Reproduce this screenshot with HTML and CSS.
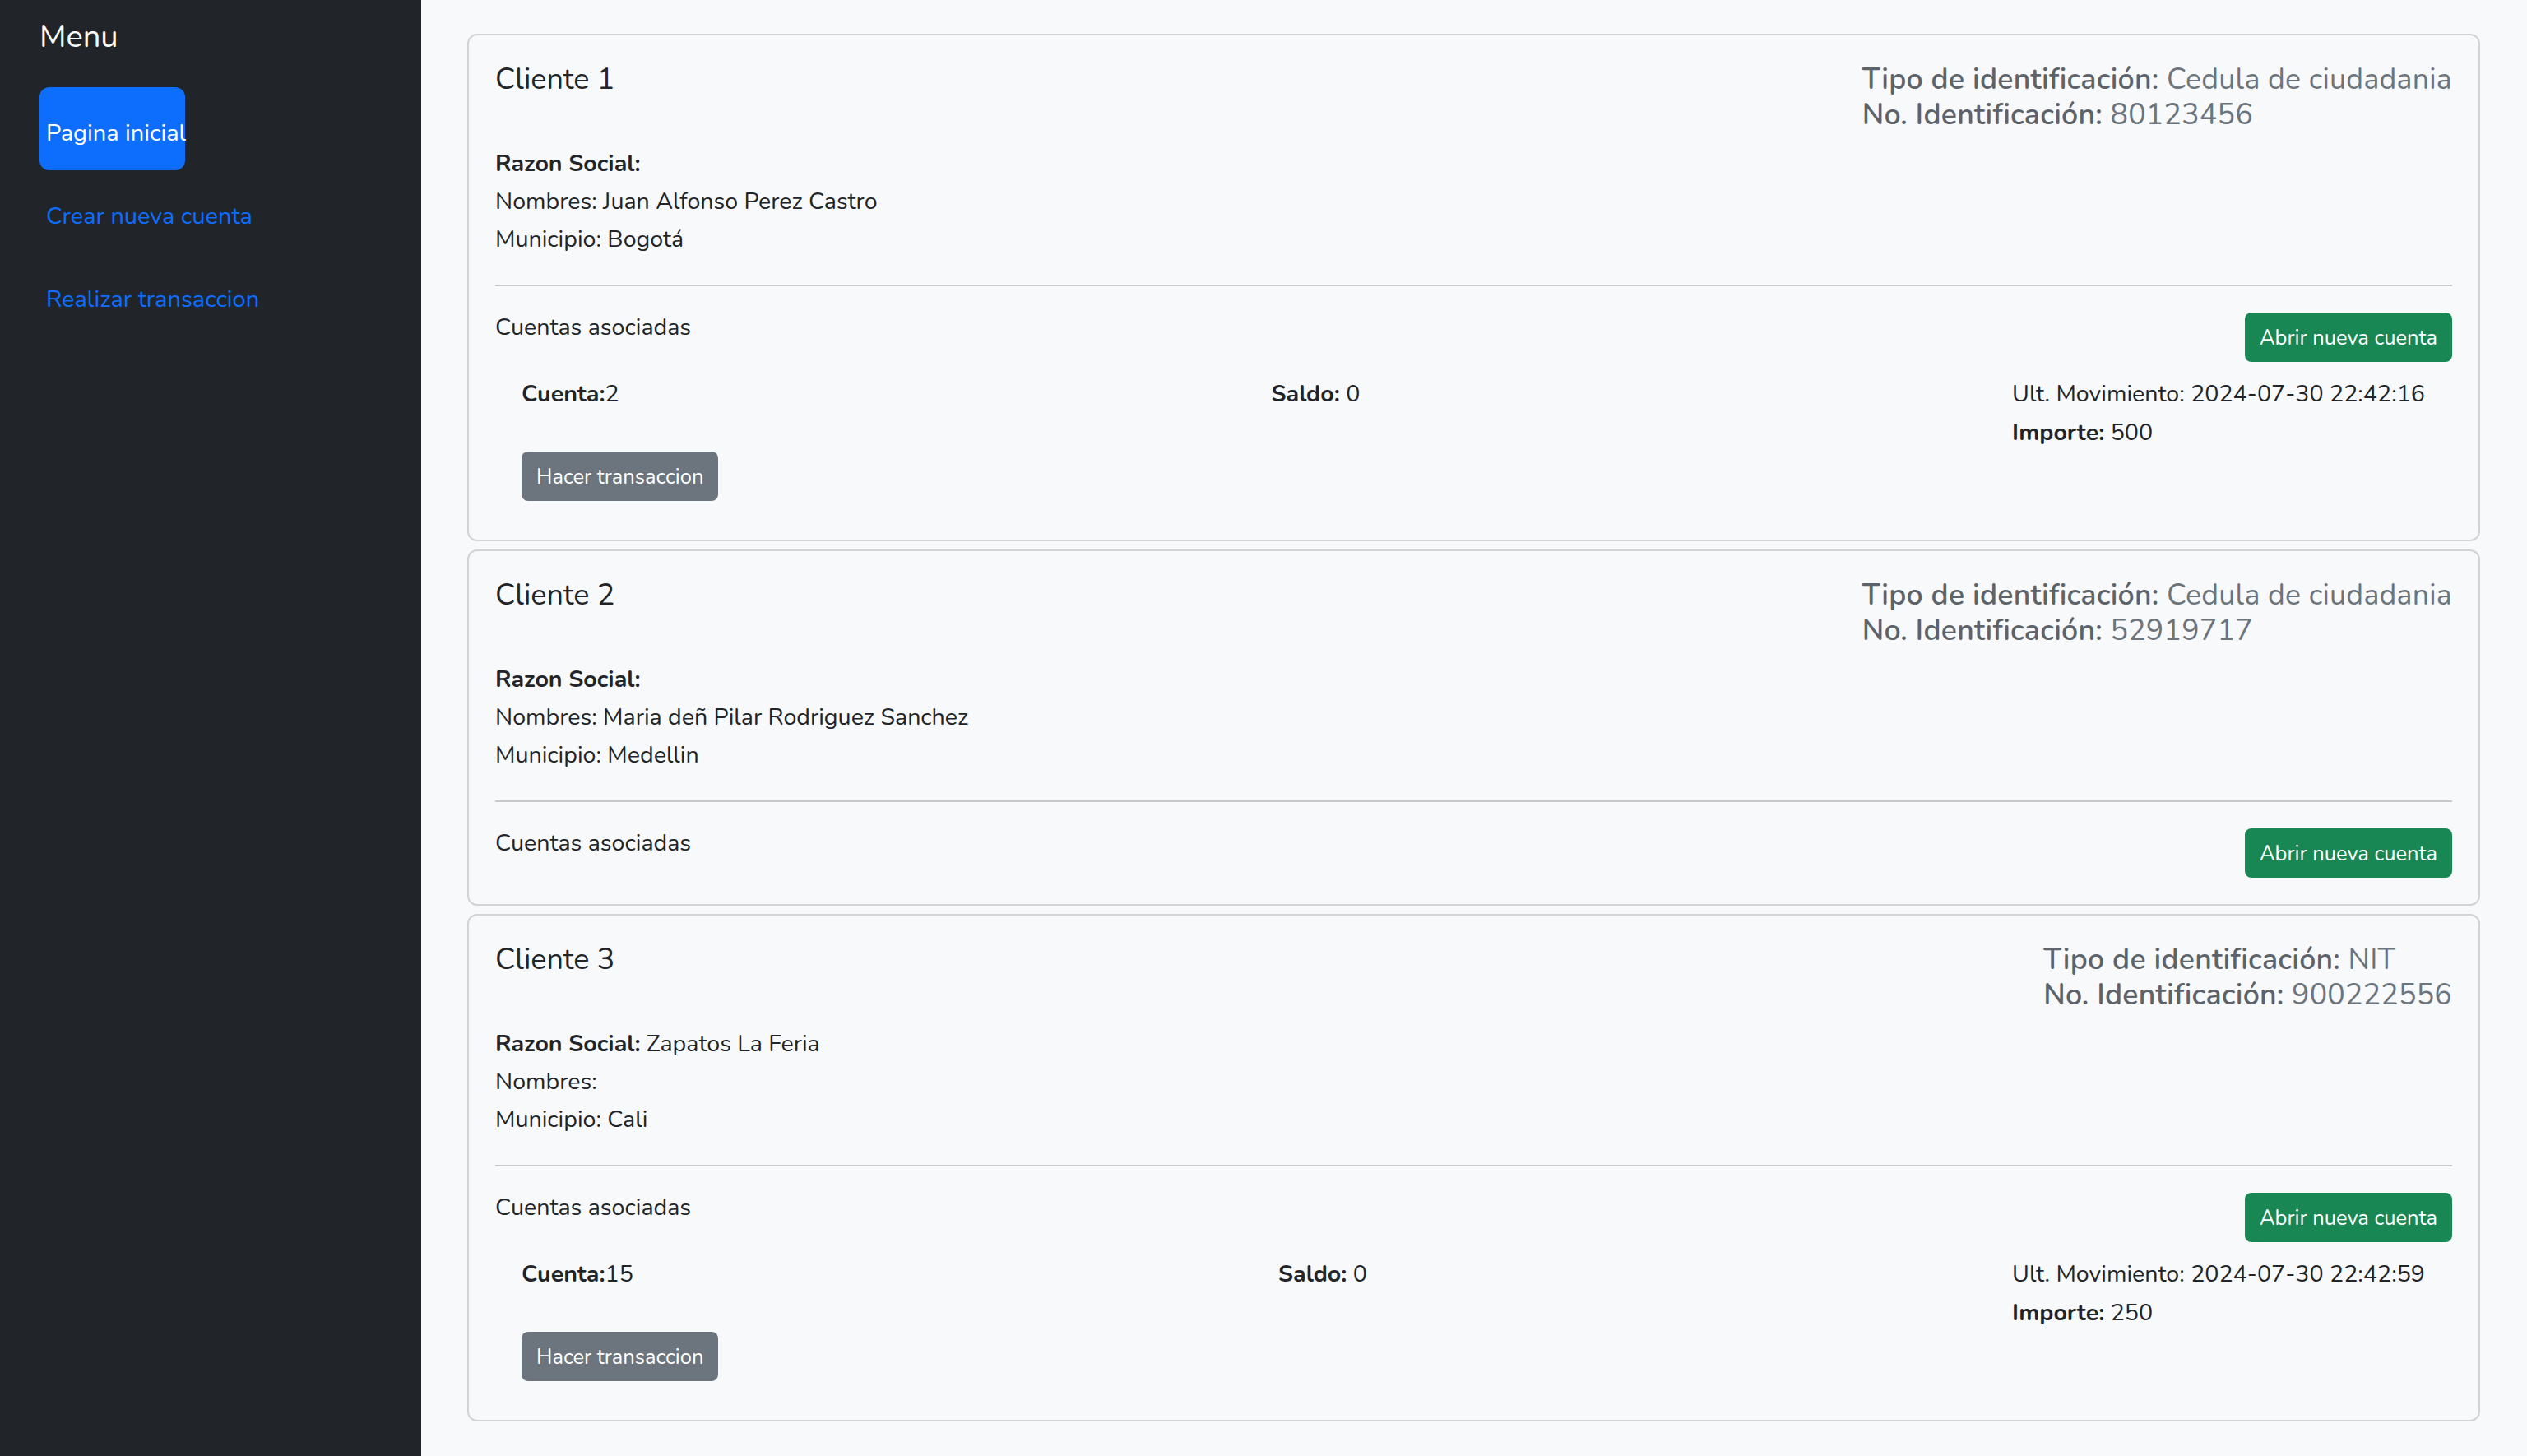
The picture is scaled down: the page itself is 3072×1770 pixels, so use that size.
FILE: index.html
```html
<!DOCTYPE html>
<html lang="es">
<head>
<meta charset="utf-8">
<title>Clientes</title>
<link rel="stylesheet" href="styles.css">
</head>
<body>
<div class="layout">
  <aside class="sidebar">
    <div class="menu-title">Menu</div>
    <nav class="nav">
      <a class="nav-link active" href="#">Pagina inicial</a>
      <a class="nav-link" href="#">Crear nueva cuenta</a>
      <a class="nav-link" href="#">Realizar transaccion</a>
    </nav>
  </aside>
  <main class="main">
    <section class="card">
      <div class="card-head">
        <div class="client-name">Cliente 1</div>
        <div class="ident">
          <div><span class="ident-label">Tipo de identificación:</span> Cedula de ciudadania</div>
          <div><span class="ident-label">No. Identificación:</span> 80123456</div>
        </div>
      </div>
      <div class="info">
        <p><b>Razon Social:</b> </p>
        <p>Nombres: Juan Alfonso Perez Castro</p>
        <p>Municipio: Bogotá</p>
      </div>
      <hr class="divider">
      <div class="accounts-head">
        <span class="accounts-title">Cuentas asociadas</span>
        <button class="btn btn-success">Abrir nueva cuenta</button>
      </div>
      <div class="account">
        <div class="account-row">
          <div><b>Cuenta:</b>2</div>
          <div><b>Saldo:</b> 0</div>
          <div class="movement">
            <div>Ult. Movimiento: 2024-07-30 22:42:16</div>
            <div><b>Importe:</b> 500</div>
          </div>
        </div>
        <button class="btn btn-secondary">Hacer transaccion</button>
      </div>
    </section>

    <section class="card">
      <div class="card-head">
        <div class="client-name">Cliente 2</div>
        <div class="ident">
          <div><span class="ident-label">Tipo de identificación:</span> Cedula de ciudadania</div>
          <div><span class="ident-label">No. Identificación:</span> 52919717</div>
        </div>
      </div>
      <div class="info">
        <p><b>Razon Social:</b> </p>
        <p>Nombres: Maria deñ Pilar Rodriguez Sanchez</p>
        <p>Municipio: Medellin</p>
      </div>
      <hr class="divider">
      <div class="accounts-head">
        <span class="accounts-title">Cuentas asociadas</span>
        <button class="btn btn-success">Abrir nueva cuenta</button>
      </div>
    </section>

    <section class="card">
      <div class="card-head">
        <div class="client-name">Cliente 3</div>
        <div class="ident">
          <div><span class="ident-label">Tipo de identificación:</span> NIT</div>
          <div><span class="ident-label">No. Identificación:</span> 900222556</div>
        </div>
      </div>
      <div class="info">
        <p><b>Razon Social:</b> Zapatos La Feria</p>
        <p>Nombres: </p>
        <p>Municipio: Cali</p>
      </div>
      <hr class="divider">
      <div class="accounts-head">
        <span class="accounts-title">Cuentas asociadas</span>
        <button class="btn btn-success">Abrir nueva cuenta</button>
      </div>
      <div class="account">
        <div class="account-row">
          <div><b>Cuenta:</b>15</div>
          <div><b>Saldo:</b> 0</div>
          <div class="movement">
            <div>Ult. Movimiento: 2024-07-30 22:42:59</div>
            <div><b>Importe:</b> 250</div>
          </div>
        </div>
        <button class="btn btn-secondary">Hacer transaccion</button>
      </div>
    </section>
  </main>
</div>
</body>
</html>
```

FILE: styles.css
```css
* { box-sizing: border-box; }

html, body {
  margin: 0;
  padding: 0;
}

body {
  font-family: "Nunito", "Lato", "Open Sans", sans-serif;
  font-size: 28.6px;
  color: #212529;
  background: #f8f9fa;
}

.layout {
  display: flex;
  min-height: 1770px;
}

.sidebar {
  width: 512px;
  flex: 0 0 512px;
  background: #212529;
  padding: 22px 0 0 48px;
}

.menu-title {
  color: #ffffff;
  font-size: 38px;
  line-height: 46px;
  margin-bottom: 38px;
}

.nav {
  display: flex;
  flex-direction: column;
}

.nav-link {
  display: flex;
  align-items: center;
  height: 101px;
  padding: 10px 0 0 8px;
  font-size: 29px;
  color: #0d6efd;
  text-decoration: none;
  white-space: nowrap;
  width: fit-content;
}

.nav-link.active {
  width: 177px;
  background: #0d6efd;
  color: #ffffff;
  border-radius: 12px;
}

.main {
  flex: 1;
  padding: 41px 57px 0 56px;
  display: flex;
  flex-direction: column;
  gap: 10px;
}

.card {
  background: #f8f9fa;
  border: 2px solid #d2d3d4;
  border-radius: 12px;
  padding: 32px;
}

.card-head {
  display: flex;
  justify-content: space-between;
  align-items: flex-start;
}

.client-name {
  font-size: 36px;
  line-height: 43px;
}

.ident {
  text-align: left;
  font-size: 35.7px;
  letter-spacing: 0.25px;
  line-height: 43px;
  color: #6c757d;
}

.ident-label {
  font-weight: 600;
  color: #5c636a;
}

.info {
  margin-top: 15px;
}

.info p {
  margin: 0;
  line-height: 46px;
}

.info b, .account b {
  font-weight: 700;
}

.divider {
  border: 0;
  border-top: 2px solid #c6c7c9;
  margin: 32px 0;
}

.accounts-head {
  display: flex;
  justify-content: space-between;
  align-items: flex-start;
}

.accounts-title {
  line-height: 36px;
}

.btn {
  font-family: inherit;
  font-size: 25.5px;
  height: 60px;
  padding: 0 18px;
  border: 0;
  border-radius: 8px;
  color: #ffffff;
  display: inline-flex;
  align-items: center;
  cursor: pointer;
}

.btn-success { background: #198754; }
.btn-secondary { background: #6c757d; }

.account {
  padding: 15px 33px 15px 32px;
}

.account-row {
  display: flex;
  justify-content: space-between;
  align-items: flex-start;
  line-height: 47px;
}
```
